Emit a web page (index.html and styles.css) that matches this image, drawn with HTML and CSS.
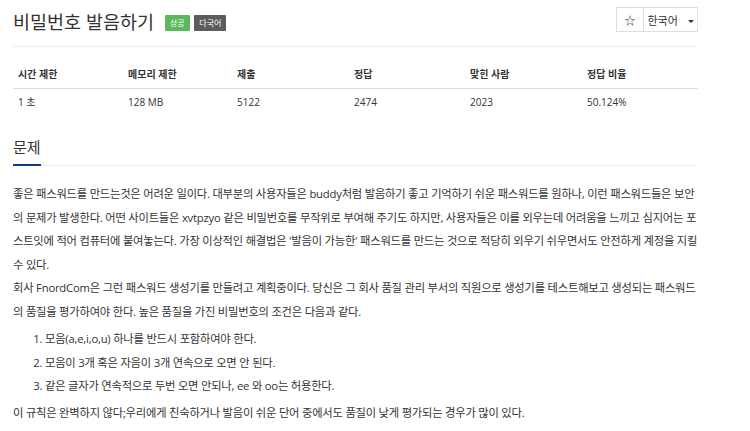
FILE: index.html
```html
<!DOCTYPE html>
<html lang="ko">
<head>
    <meta charset="UTF-8">
    <meta name="viewport" content="width=device-width, initial-scale=1.0">
    <title>비밀번호 발음하기</title>
    <link rel="stylesheet" href="styles.css">
</head>
<body>
    <div class="container">
        <div class="page-header">
            <h1>비밀번호 발음하기 <span class="label label-success">성공</span> <span class="label label-default">다국어</span></h1>
            <div class="btn-group">
                <button class="btn btn-star">&#9734;</button>
                <button class="btn btn-lang">한국어 <span class="caret"></span></button>
            </div>
        </div>

        <table class="info-table">
            <colgroup>
                <col class="c1">
                <col class="c2">
                <col class="c3">
                <col class="c4">
                <col class="c5">
                <col>
            </colgroup>
            <thead>
                <tr>
                    <th>시간 제한</th>
                    <th>메모리 제한</th>
                    <th>제출</th>
                    <th>정답</th>
                    <th>맞힌 사람</th>
                    <th>정답 비율</th>
                </tr>
            </thead>
            <tbody>
                <tr>
                    <td>1 초</td>
                    <td>128 MB</td>
                    <td>5122</td>
                    <td>2474</td>
                    <td>2023</td>
                    <td>50.124%</td>
                </tr>
            </tbody>
        </table>

        <section class="problem">
            <div class="headline">
                <h2>문제</h2>
            </div>
            <div class="problem-text">
                <p>좋은 패스워드를 만드는것은 어려운 일이다. 대부분의 사용자들은 buddy처럼 발음하기 좋고 기억하기 쉬운 패스워드를 원하나, 이런 패스워드들은 보안의 문제가 발생한다. 어떤 사이트들은 xvtpzyo 같은 비밀번호를 무작위로 부여해 주기도 하지만, 사용자들은 이를 외우는데 어려움을 느끼고 심지어는 포스트잇에 적어 컴퓨터에 붙여놓는다. 가장 이상적인 해결법은 '발음이 가능한' 패스워드를 만드는 것으로 적당히 외우기 쉬우면서도 안전하게 계정을 지킬 수 있다.</p>
                <p>회사 FnordCom은 그런 패스워드 생성기를 만들려고 계획중이다. 당신은 그 회사 품질 관리 부서의 직원으로 생성기를 테스트해보고 생성되는 패스워드의 품질을 평가하여야 한다. 높은 품질을 가진 비밀번호의 조건은 다음과 같다.</p>
                <ol>
                    <li>모음(a,e,i,o,u) 하나를 반드시 포함하여야 한다.</li>
                    <li>모음이 3개 혹은 자음이 3개 연속으로 오면 안 된다.</li>
                    <li>같은 글자가 연속적으로 두번 오면 안되나, ee 와 oo는 허용한다.</li>
                </ol>
                <p>이 규칙은 완벽하지 않다;우리에게 친숙하거나 발음이 쉬운 단어 중에서도 품질이 낮게 평가되는 경우가 많이 있다.</p>
            </div>
        </section>
    </div>
</body>
</html>
```

FILE: styles.css
```css
body {
    margin: 0;
    font-family: "Open Sans", "Noto Sans CJK KR", sans-serif;
    color: #333;
    background-color: #fff;
}
.container {
    width: 685px;
    margin-left: 13px;
}
.page-header {
    display: flex;
    justify-content: space-between;
    align-items: flex-start;
    border-bottom: 1px solid #eee;
    padding: 7px 0 9px;
}
.page-header h1 {
    margin: 0;
    font-size: 18.5px;
    font-weight: 400;
    line-height: 30px;
    color: #333;
}
.label {
    display: inline-block;
    vertical-align: 3px;
    font-size: 8px;
    line-height: 10px;
    padding: 3px 5px;
    color: #fff;
    border-radius: 1px;
}
.label-success {
    margin-left: 6px;
    background-color: #5cb85c;
}
.label-default {
    background-color: #5c5c5c;
}
.btn-group {
    display: flex;
}
.btn {
    font-family: inherit;
    background: #fff;
    border: 1px solid #ddd;
    height: 25px;
    font-size: 11px;
    color: #333;
    padding: 0;
    white-space: nowrap;
}
.btn-star {
    width: 28px;
    font-size: 11px;
}
.btn-lang {
    border-left: none;
    width: 54px;
}
.caret {
    display: inline-block;
    margin-left: 7px;
    vertical-align: 2px;
    border-top: 3px solid #333;
    border-left: 3px solid transparent;
    border-right: 3px solid transparent;
}
.info-table {
    width: 100%;
    table-layout: fixed;
    border-collapse: collapse;
    margin-top: 13px;
    font-size: 10px;
}
.c1 { width: 110px; }
.c2 { width: 109px; }
.c3 { width: 117px; }
.c4 { width: 116px; }
.c5 { width: 117px; }
.info-table th {
    text-align: left;
    font-weight: 700;
    padding: 6px 5px 7px;
    border-bottom: 1px solid #ddd;
}
.info-table td {
    padding: 5px 5px 6px;
}
.problem {
    margin-top: 20px;
}
.headline {
    border-bottom: 1px solid #eee;
}
.headline h2 {
    display: inline-block;
    margin: 0;
    font-size: 15px;
    font-weight: 400;
    line-height: 24px;
    padding-bottom: 5px;
    border-bottom: 2px solid #0d3c8b;
    margin-bottom: -1px;
}
.problem-text {
    font-size: 11.3px;
    letter-spacing: -0.22px;
    line-height: 23.5px;
    padding-top: 16px;
    word-break: break-all;
}
.problem-text p {
    margin: 0;
}
.problem-text ol {
    margin: 4px 0 3px;
    padding-left: 32px;
}
```
